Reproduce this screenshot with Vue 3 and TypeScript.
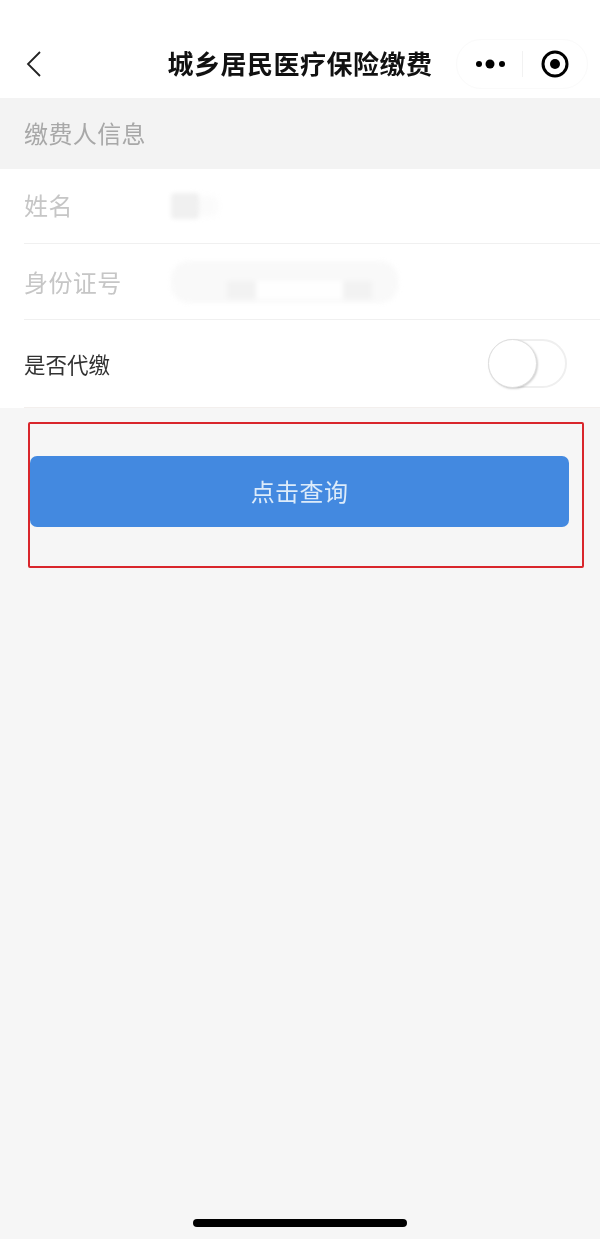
<template>
  <div class="page">
    <header class="nav">
      <button class="back" aria-label="返回">
        <svg width="18" height="28" viewBox="0 0 18 28">
          <path d="M16 2 L4 14 L16 26" fill="none" stroke="#222" stroke-width="1.8" />
        </svg>
      </button>
      <h1 class="title">城乡居民医疗保险缴费</h1>
      <div class="capsule">
        <svg class="dots" width="36" height="12" viewBox="0 0 36 12">
          <circle cx="6" cy="6" r="3" fill="#000" />
          <circle cx="17" cy="6" r="4.5" fill="#000" />
          <circle cx="29" cy="6" r="3" fill="#000" />
        </svg>
        <span class="capsule-line"></span>
        <svg class="target" width="28" height="28" viewBox="0 0 28 28">
          <circle cx="14" cy="14" r="12" fill="none" stroke="#000" stroke-width="3" />
          <circle cx="14" cy="14" r="5" fill="#000" />
        </svg>
      </div>
    </header>

    <div class="section-title">缴费人信息</div>

    <section class="form">
      <div class="row row-name">
        <span class="label">姓名</span>
        <span class="mask-name"></span>
      </div>
      <div class="row row-id">
        <span class="label">身份证号</span>
        <span class="mask-id">
          <i class="patch"></i>
          <i class="gap"></i>
          <i class="patch"></i>
        </span>
      </div>
      <div class="row row-switch">
        <span class="label label-dark">是否代缴</span>
        <button class="switch" :class="{ on: agent }" aria-label="是否代缴" @click="agent = !agent">
          <span class="knob"></span>
        </button>
      </div>
    </section>

    <div class="highlight">
      <button class="query">点击查询</button>
    </div>

    <div class="home-bar"></div>
  </div>
</template>

<script setup lang="ts">
import { ref } from 'vue';

const agent = ref(false);
</script>

<style>
html,
body {
  margin: 0;
  background: #f6f6f6;
}
</style>

<style scoped>
.page {
  display: flex;
  flex-direction: column;
  min-height: 1239px;
  background: #f6f6f6;
  font-family: 'Noto Sans CJK SC', 'Noto Sans', sans-serif;
  filter: blur(0.5px);
}

button {
  padding: 0;
  border: 0;
  background: none;
  font: inherit;
}

.nav {
  display: grid;
  grid-template-columns: 132px 1fr 132px;
  box-sizing: border-box;
  height: 98px;
  padding: 39px 12px 0 24px;
  background: #fff;
}

.back {
  display: flex;
  height: 50px;
  align-items: center;
}

.title {
  margin: 0;
  height: 50px;
  line-height: 48px;
  text-align: center;
  font-size: 26px;
  font-weight: 700;
  letter-spacing: 0.5px;
  color: #111;
  white-space: nowrap;
  transform: translateX(-6px);
}

.capsule {
  display: flex;
  align-items: center;
  box-sizing: border-box;
  height: 50px;
  padding-left: 16px;
  border: 1px solid #fafafa;
  border-radius: 25px;
}

.capsule-line {
  width: 1px;
  height: 26px;
  margin: 0 18px 0 13px;
  background: #f2f2f2;
}

.section-title {
  height: 71px;
  padding-left: 24px;
  line-height: 69px;
  font-size: 24px;
  letter-spacing: 0.4px;
  color: #a8a8a8;
  background: #f3f3f3;
}

.form {
  background: #fff;
}

.row {
  display: flex;
  align-items: center;
  box-sizing: border-box;
  margin-left: 24px;
  border-bottom: 1px solid #f0f0f0;
}

.row-name {
  height: 75px;
}

.row-id {
  height: 76px;
}

.row-switch {
  justify-content: space-between;
  height: 88px;
  padding-right: 33px;
  border-bottom-color: #f3efed;
}

.label {
  flex: none;
  width: 147px;
  padding-bottom: 3px;
  font-size: 24px;
  letter-spacing: 0.4px;
  color: #c6c6c6;
}

.row-id .label {
  padding-bottom: 1px;
}

.label-dark {
  padding-bottom: 0;
  font-size: 21.5px;
  letter-spacing: 0;
  color: #333;
}

.mask-name {
  width: 28px;
  height: 26px;
  border-radius: 4px;
  background: #f0f0f0;
  box-shadow: 22px 0 6px -3px #fbfbfb;
  filter: blur(2px);
}

.mask-id {
  display: flex;
  align-items: flex-end;
  box-sizing: border-box;
  width: 227px;
  height: 42px;
  padding: 0 26px 4px 56px;
  border-radius: 18px;
  background: #f9f9f9;
  filter: blur(2.5px);
}

.patch {
  width: 29px;
  height: 18px;
  background: #f2f2f2;
}

.gap {
  flex: 1;
  height: 18px;
  background: #fefefe;
}

.switch {
  position: relative;
  width: 79px;
  height: 49px;
  box-sizing: border-box;
  border: 2px solid #efefef;
  border-radius: 25px;
  background: #fff;
}

.knob {
  position: absolute;
  top: -2px;
  left: -2px;
  box-sizing: border-box;
  width: 49px;
  height: 49px;
  border: 1px solid #dedede;
  border-radius: 50%;
  background: #fff;
  box-shadow: 1px 1px 2px rgba(0, 0, 0, 0.18);
}

.switch.on .knob {
  left: 28px;
}

.highlight {
  box-sizing: border-box;
  width: 556px;
  height: 146px;
  margin: 14px 0 0 28px;
  padding-top: 32px;
  border: 2px solid #d9262c;
  border-radius: 2px;
}

.query {
  display: block;
  width: 539px;
  height: 71px;
  padding-bottom: 3px;
  border-radius: 7px;
  background: #4389e0;
  color: #dcebfa;
  font-size: 24px;
  letter-spacing: 0.4px;
}

.home-bar {
  width: 214px;
  height: 8px;
  margin: auto 0 12px 193px;
  border-radius: 4px;
  background: #000;
}
</style>
